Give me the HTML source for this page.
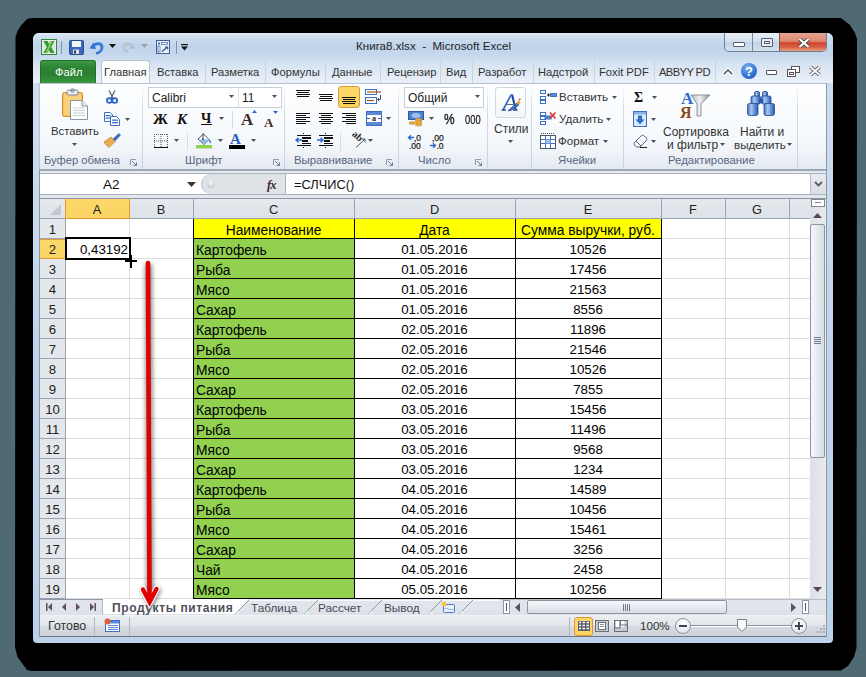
<!DOCTYPE html>
<html><head><meta charset="utf-8">
<style>
*{margin:0;padding:0;box-sizing:border-box}
html,body{width:866px;height:677px;overflow:hidden;background:#4f6a72;font-family:"Liberation Sans",sans-serif;}
.a{position:absolute}
.t{position:absolute;white-space:nowrap;line-height:1}
#frame{left:16px;top:18px;width:841px;height:652px;background:#000;border-radius:20px}
#win{left:33px;top:33px;width:800px;height:610px;background:linear-gradient(180deg,#cfdff1,#c0d5ec 50%,#bcd2ea);border-radius:6px 6px 4px 4px;overflow:hidden}
#title{left:33px;top:33px;width:800px;height:50px;background:linear-gradient(180deg,#e4edf7 0%,#d0e0f1 6%,#bfd4ec 26%,#c6d8ed 45%,#d9e5f3 65%,#eaf0f8 100%);border-radius:6px 6px 0 0}
.tab{font-size:11.2px;color:#333;}
.sep{position:absolute;width:1px;background:#c9d4e1}
#ribbon{left:39px;top:83px;width:788px;height:87px;background:linear-gradient(180deg,#fdfeff 0%,#f6f9fc 60%,#e9eef5 100%);border:1px solid #b8c3d0;border-bottom:none}
.grp{position:absolute;top:85px;height:84px;width:1px;background:linear-gradient(180deg,rgba(200,210,222,0) 0%,#d2dae4 30%,#c9d2dd 100%)}
.glabel{position:absolute;top:155px;font-size:11.4px;color:#56677e}
.rt{font-size:11.6px;color:#333}
.cell{position:absolute;font-size:13.8px;color:#000;line-height:1;white-space:nowrap}
.num{font-size:13.3px}
</style></head><body>
<svg class="a" style="left:0;top:0" width="866" height="677"><path d="M31 18 L841 18 L850 25 L855 33 L857 39 L856.5 648 L854 657 L848 666 L841 670.5 L31 671 L27 670 L17.5 657 L15 647 L15.5 37 L17.5 31 L21 25.5 L27 19 Z" fill="#000"/></svg>
<div class="a" id="win"></div>
<div class="a" id="title"></div>

<svg class="a" style="left:41px;top:39px" width="16" height="16" viewBox="0 0 16 16">
 <rect x="0.5" y="0.5" width="15" height="15" fill="#f4f6f4" stroke="#2e8b35"/>
 <rect x="1.5" y="1.5" width="13" height="13" fill="#dfe4df"/>
 <path d="M2.5 2 L6.5 2 L8 5 L9.5 2 L13.5 2 L10.2 8 L13.5 14 L9.5 14 L8 11 L6.5 14 L2.5 14 L5.8 8 Z" fill="#2f9a36"/>
 <path d="M9.5 2 L11.5 2 L6.5 14 L4.5 14 Z" fill="#9fe070" opacity=".75"/>
</svg>
<div class="a" style="left:61px;top:41px;width:1px;height:13px;background:#8593a5"></div>
<svg class="a" style="left:69px;top:40px" width="15" height="15" viewBox="0 0 15 15">
 <rect x="0.5" y="0.5" width="14" height="14" rx="1" fill="#3c68b8" stroke="#274c8c"/>
 <rect x="3" y="1" width="9" height="6" fill="#f2f5fa"/>
 <rect x="4" y="9.5" width="6" height="4.5" fill="#dce3ee"/>
 <rect x="5" y="10.5" width="2" height="3" fill="#3a3a3a"/>
</svg>
<svg class="a" style="left:89px;top:40px" width="16" height="15" viewBox="0 0 16 15">
 <path d="M4.5 2.5 L0.5 8.5 L7 9 Z" fill="#2f6fd0"/>
 <path d="M4 6.5 C7 2.5 13 2.5 13 7.5 C13 11 9.5 13 7 13.5" stroke="#3579d4" stroke-width="2.8" fill="none"/>
</svg>
<svg class="a" style="left:109px;top:44px" width="7" height="4"><path d="M0 0 H7 L3.5 4 Z" fill="#111"/></svg>
<svg class="a" style="left:122px;top:41px" width="14" height="12" viewBox="0 0 14 12">
 <path d="M10 2 L13.5 7.5 L7.5 7.5 Z" fill="#b4bcc6"/>
 <path d="M10 5 C7 1.5 2 2 2 6 C2 9 4 10.5 6.5 11" stroke="#bcc3cc" stroke-width="2.4" fill="none"/>
</svg>
<svg class="a" style="left:141px;top:44px" width="7" height="4"><path d="M0 0 H7 L3.5 4 Z" fill="#9aa3ad"/></svg>
<svg class="a" style="left:156px;top:40px" width="14" height="14" viewBox="0 0 14 14">
 <rect x="0.5" y="0.5" width="13" height="13" fill="#eef3fa" stroke="#3d5f9c"/>
 <rect x="2" y="2.5" width="2" height="2" fill="#4a70b0"/><rect x="5.5" y="2.5" width="6" height="2" fill="#fff" stroke="#4a70b0" stroke-width=".8"/>
 <rect x="2" y="6" width="2" height="6" fill="#fff" stroke="#4a70b0" stroke-width=".8"/>
 <path d="M6 11.5 L11.5 7" stroke="#2a4f8f" stroke-width="1.2"/><path d="M9 7 H11.7 V9.5" stroke="#2a4f8f" stroke-width="1" fill="none"/>
</svg>
<div class="a" style="left:176px;top:41px;width:1px;height:13px;background:#8593a5"></div>
<svg class="a" style="left:181px;top:44px" width="7" height="7"><rect x="0" y="0" width="7" height="1.2" fill="#111"/><path d="M0 2.5 H7 L3.5 6.5 Z" fill="#111"/></svg>
<div class="t" style="left:356px;top:40px;font-size:11.6px;color:#1e1e1e">Книга8.xlsx&nbsp; - &nbsp;Microsoft Excel</div>
<div class="a" style="left:724px;top:33px;width:103px;height:19px;border:1px solid #6f7f92;border-top:none;border-radius:0 0 5px 5px;overflow:hidden;background:linear-gradient(180deg,#e9eff7,#d3deeb 50%,#c3d3e6 51%,#d4e2f1)">
  <div class="a" style="left:27px;top:0;width:1px;height:18px;background:#7a889a"></div>
  <div class="a" style="left:54px;top:0;width:48px;height:18px;background:linear-gradient(180deg,#e8a48f 0%,#dc8a72 45%,#d0432d 55%,#d7644a 80%,#eaa07a 100%);border-left:1px solid #7a5a50"></div>
</div>
<div class="a" style="left:733px;top:42px;width:12px;height:5px;background:#fff;border:1px solid #555e6a;border-radius:1px"></div>
<div class="a" style="left:761px;top:38px;width:12px;height:9px;border:1px solid #555e6a;background:#e8eef6;border-radius:1px"><div class="a" style="left:2px;top:2px;width:6px;height:3px;border:1px solid #555e6a;background:#fff"></div></div>
<svg class="a" style="left:798px;top:38px" width="12" height="10" viewBox="0 0 12 10"><path d="M1.5 1 L10.5 9 M10.5 1 L1.5 9" stroke="#4a4a4a" stroke-width="3.8"/><path d="M1.5 1 L10.5 9 M10.5 1 L1.5 9" stroke="#fff" stroke-width="2.2"/></svg>
<div class="a" style="left:40px;top:60px;width:56px;height:23px;background:linear-gradient(180deg,#3c9a42 0%,#2e8634 25%,#2a7f30 60%,#3b973f 100%);border-radius:3px 3px 0 0;border:1px solid #216f28;border-bottom:none"></div>
<div class="t" style="left:55px;top:67px;font-size:11.2px;color:#fff">Файл</div>
<div class="a" style="left:101px;top:60px;width:49px;height:24px;background:linear-gradient(180deg,#fefefe,#f7f9fc);border:1px solid #b9c4d1;border-bottom:none;border-radius:3px 3px 0 0"></div>

<div class="t tab" style="left:104px;top:67px">Главная</div>
<div class="t tab" style="left:157px;top:67px">Вставка</div>
<div class="sep" style="left:205px;top:60px;height:23px"></div>
<div class="t tab" style="left:211px;top:67px">Разметка</div>
<div class="sep" style="left:265px;top:60px;height:23px"></div>
<div class="t tab" style="left:271px;top:67px">Формулы</div>
<div class="sep" style="left:325px;top:60px;height:23px"></div>
<div class="t tab" style="left:332px;top:67px">Данные</div>
<div class="sep" style="left:380px;top:60px;height:23px"></div>
<div class="t tab" style="left:387px;top:67px">Рецензир</div>
<div class="sep" style="left:440px;top:60px;height:23px"></div>
<div class="t tab" style="left:446px;top:67px">Вид</div>
<div class="sep" style="left:472px;top:60px;height:23px"></div>
<div class="t tab" style="left:478px;top:67px">Разработ</div>
<div class="sep" style="left:533px;top:60px;height:23px"></div>
<div class="t tab" style="left:538px;top:67px">Надстрой</div>
<div class="sep" style="left:594px;top:60px;height:23px"></div>
<div class="t tab" style="left:599px;top:67px">Foxit PDF</div>
<div class="sep" style="left:654px;top:60px;height:23px"></div>
<div class="t tab" style="left:659px;top:67px"><span style='letter-spacing:-.6px'>ABBYY PD</span></div>
<div class="sep" style="left:715px;top:60px;height:23px"></div>
<svg class="a" style="left:723px;top:68px" width="10" height="7" viewBox="0 0 10 7"><path d="M1 6 L5 2 L9 6" stroke="#fff" stroke-width="3.4" fill="none"/><path d="M1 6 L5 2 L9 6" stroke="#4f4a4a" stroke-width="1.4" fill="none"/></svg>
<div class="a" style="left:741px;top:63px;width:16px;height:16px;border-radius:50%;background:radial-gradient(circle at 40% 30%,#7fb4f0,#2b6fd1 60%,#1d57b0)"></div>
<div class="t" style="left:745px;top:64px;font:bold 13px 'Liberation Sans';color:#fff">?</div>
<div class="a" style="left:766px;top:70px;width:11px;height:5px;border:1px solid #5a5056;background:#fff;border-radius:1px"></div>
<svg class="a" style="left:787px;top:66px" width="13" height="11" viewBox="0 0 13 11"><rect x="4.5" y="0.5" width="8" height="6" fill="#fff" stroke="#5a5056"/><rect x="0.5" y="3.5" width="8" height="7" fill="#fff" stroke="#5a5056"/><rect x="2.5" y="6.5" width="4" height="2" fill="none" stroke="#5a5056"/></svg>
<svg class="a" style="left:809px;top:66px" width="12" height="10" viewBox="0 0 12 10"><path d="M1.5 1 L10.5 9 M10.5 1 L1.5 9" stroke="#5a5056" stroke-width="3.6"/><path d="M1.5 1 L10.5 9 M10.5 1 L1.5 9" stroke="#fff" stroke-width="1.8"/></svg><div class="a" id="ribbon"></div>
<div class="a" style="left:40px;top:154px;width:786px;height:16px;background:linear-gradient(180deg,#eef2f7,#e3e9f1)"></div>
<div class="grp" style="left:142px"></div>
<div class="grp" style="left:284px"></div>
<div class="grp" style="left:398px"></div>
<div class="grp" style="left:487px"></div>
<div class="grp" style="left:531px"></div>
<div class="grp" style="left:623px"></div>
<div class="grp" style="left:797px"></div>
<div class="t glabel" style="left:44px;font-size:11.2px">Буфер обмена</div>
<div class="t glabel" style="left:185px;font-size:11.4px">Шрифт</div>
<div class="t glabel" style="left:294px;font-size:11.4px">Выравнивание</div>
<div class="t glabel" style="left:418px;font-size:11.4px">Число</div>
<div class="t glabel" style="left:558px;font-size:11.4px">Ячейки</div>
<div class="t glabel" style="left:668px;font-size:11.4px">Редактирование</div>
<svg class="a" style="left:130px;top:159px" width="7" height="7" viewBox="0 0 7 7"><path d="M0.5 6 V0.5 H6" stroke="#8b9bb0" fill="none"/><path d="M2 2 L6.5 6.5 M3.5 6.5 H6.5 V3.5" stroke="#6f7f95" fill="none"/></svg>
<svg class="a" style="left:273px;top:159px" width="7" height="7" viewBox="0 0 7 7"><path d="M0.5 6 V0.5 H6" stroke="#8b9bb0" fill="none"/><path d="M2 2 L6.5 6.5 M3.5 6.5 H6.5 V3.5" stroke="#6f7f95" fill="none"/></svg>
<svg class="a" style="left:386px;top:159px" width="7" height="7" viewBox="0 0 7 7"><path d="M0.5 6 V0.5 H6" stroke="#8b9bb0" fill="none"/><path d="M2 2 L6.5 6.5 M3.5 6.5 H6.5 V3.5" stroke="#6f7f95" fill="none"/></svg>
<svg class="a" style="left:475px;top:159px" width="7" height="7" viewBox="0 0 7 7"><path d="M0.5 6 V0.5 H6" stroke="#8b9bb0" fill="none"/><path d="M2 2 L6.5 6.5 M3.5 6.5 H6.5 V3.5" stroke="#6f7f95" fill="none"/></svg>
<svg class="a" style="left:60px;top:88px" width="30" height="32" viewBox="0 0 30 32">
 <rect x="2.5" y="4.5" width="20" height="24" rx="2" fill="#f7c25a" stroke="#d38b2e"/>
 <rect x="4" y="6" width="17" height="21" fill="#fbd27c"/>
 <rect x="7" y="2" width="11" height="5" rx="1.5" fill="#e9ecef" stroke="#7d8590"/>
 <circle cx="12.5" cy="2.5" r="1.6" fill="none" stroke="#6f7782"/>
 <path d="M10.5 12.5 H22 L27.5 18 V31.5 H10.5 Z" fill="#fff" stroke="#8895a4"/>
 <path d="M22 12.5 V18 H27.5" fill="#e6ebf2" stroke="#8895a4"/>
 <path d="M13 20 H25 M13 22.5 H25 M13 25 H25 M13 27.5 H25" stroke="#b8c4d2" stroke-width=".8"/>
</svg>
<div class="t rt" style="left:51px;top:126px;font-size:11.3px">Вставить</div>
<svg class="a" style="left:72px;top:143px" width="5" height="3"><path d="M0 0 H5 L2.5 3 Z" fill="#4a4f5a"/></svg>
<svg class="a" style="left:106px;top:90px" width="12" height="14" viewBox="0 0 12 14">
 <path d="M3 0.5 L7 8 M9 0.5 L5 8" stroke="#5a6270" stroke-width="1.3"/>
 <circle cx="3.3" cy="10.5" r="2.4" fill="none" stroke="#2b62c8" stroke-width="1.8"/>
 <circle cx="8.7" cy="10.5" r="2.4" fill="none" stroke="#2b62c8" stroke-width="1.8"/>
</svg>
<svg class="a" style="left:104px;top:112px" width="16" height="14" viewBox="0 0 16 14">
 <path d="M0.5 0.5 H6 L8.5 3 V9.5 H0.5 Z" fill="#fff" stroke="#3a6fc4"/>
 <rect x="1.5" y="3" width="5" height="1.2" fill="#3a6fc4"/><rect x="1.5" y="5.5" width="5" height="1.2" fill="#3a6fc4"/>
 <path d="M6.5 4.5 H12.5 L15.5 7.5 V13.5 H6.5 Z" fill="#fff" stroke="#3a6fc4"/>
 <rect x="8" y="7.5" width="6" height="1.3" fill="#3a6fc4"/><rect x="8" y="10" width="6" height="1.3" fill="#3a6fc4"/>
</svg>
<svg class="a" style="left:125px;top:118px" width="5" height="3"><path d="M0 0 H5 L2.5 3 Z" fill="#4a4f5a"/></svg>
<svg class="a" style="left:103px;top:133px" width="18" height="15" viewBox="0 0 18 15">
 <path d="M10 6 L16 0.5 L17.5 2 L12 8 Z" fill="#3d6fc8" stroke="#2a55a0" stroke-width=".6"/>
 <path d="M1 9 L8 4 L12 8.5 L6 14.5 C4 13 2 11 1 9 Z" fill="#f2b860" stroke="#b77a2b" stroke-width=".8"/>
 <path d="M3 10 L8 6 M5 12 L10 7.5" stroke="#c98a3a" stroke-width=".8"/>
</svg>
<div class="a" style="left:148px;top:87px;width:134px;height:21px;background:#fff;border:1px solid #c5cfdb"></div>
<div class="a" style="left:238px;top:88px;width:1px;height:19px;background:#dde3ea"></div>
<div class="t" style="left:152px;top:92px;font-size:12px;color:#222">Calibri</div>
<div class="t" style="left:242px;top:92px;font-size:12px;color:#222">11</div>
<svg class="a" style="left:229px;top:95px" width="5" height="3"><path d="M0 0 H5 L2.5 3 Z" fill="#4a4f5a"/></svg>
<svg class="a" style="left:272px;top:95px" width="5" height="3"><path d="M0 0 H5 L2.5 3 Z" fill="#4a4f5a"/></svg>
<div class="t" style="left:153px;top:111px;font:bold 15px 'Liberation Serif',serif;color:#111">Ж</div>
<div class="t" style="left:177px;top:111px;font:italic bold 15px 'Liberation Serif',serif;color:#111">К</div>
<div class="t" style="left:201px;top:111px;font:bold 14px 'Liberation Serif',serif;color:#111">Ч</div>
<div class="a" style="left:201px;top:124px;width:11px;height:1px;background:#111"></div>
<svg class="a" style="left:219px;top:117px" width="5" height="3"><path d="M0 0 H5 L2.5 3 Z" fill="#4a4f5a"/></svg>
<div class="a" style="left:232px;top:111px;width:1px;height:17px;background:#d4dbe4"></div>
<div class="t" style="left:241px;top:110px;font:bold 17px 'Liberation Serif',serif;color:#3e2a28">A</div>
<svg class="a" style="left:252px;top:110px" width="5" height="3"><path d="M0 3 L2.5 0 L5 3Z" fill="#2b6ac9"/></svg>
<div class="t" style="left:264px;top:115px;font:bold 13px 'Liberation Serif',serif;color:#3e2a28">A</div>
<svg class="a" style="left:273px;top:111px" width="5" height="3"><path d="M0 0 L5 0 L2.5 3Z" fill="#2b6ac9"/></svg>
<svg class="a" style="left:154px;top:134px" width="14" height="14" viewBox="0 0 14 14">
 <path d="M0.5 0 V13 M13.5 0 V13 M7 0 V13 M0 0.5 H14 M0 7 H14" stroke="#5a6270" stroke-width="1" stroke-dasharray="1 1" fill="none"/>
 <rect x="0" y="13" width="14" height="1.2" fill="#111"/>
</svg>
<svg class="a" style="left:174px;top:139px" width="5" height="3"><path d="M0 0 H5 L2.5 3 Z" fill="#4a4f5a"/></svg>
<div class="a" style="left:187px;top:133px;width:1px;height:17px;background:#d4dbe4"></div>
<svg class="a" style="left:196px;top:132px" width="17" height="17" viewBox="0 0 17 17">
 <path d="M2 7 L7.5 2 L13 7.5 L8 12.5 Z" fill="#fff" stroke="#4a5564" stroke-width="1"/>
 <path d="M2.5 7.5 L13 7.5 L8 12.5 Z" fill="#8fb6e8"/>
 <path d="M7 1 V7" stroke="#4a5564"/><circle cx="7" cy="7" r="1" fill="#4a5564"/>
 <path d="M13 7.5 C15 9 15.5 10.5 14.5 11.5 C13.5 10.5 13 9.5 13 7.5Z" fill="#2b6ac9"/>
 <rect x="0" y="13" width="16" height="3.5" fill="#92d050"/>
</svg>
<svg class="a" style="left:218px;top:139px" width="5" height="3"><path d="M0 0 H5 L2.5 3 Z" fill="#4a4f5a"/></svg>
<div class="t" style="left:230px;top:131px;font:bold 15px 'Liberation Serif',serif;color:#2a5fbd">A</div>
<div class="a" style="left:229px;top:145px;width:16px;height:3.5px;background:#000;"></div>
<svg class="a" style="left:251px;top:139px" width="5" height="3"><path d="M0 0 H5 L2.5 3 Z" fill="#4a4f5a"/></svg>
<div class="a" style="left:296px;top:90px;width:14px;height:1px;background:#111"></div><div class="a" style="left:297px;top:92px;width:12px;height:1px;background:#111"></div><div class="a" style="left:296px;top:94px;width:14px;height:1px;background:#111"></div><div class="a" style="left:297px;top:96px;width:12px;height:1px;background:#111"></div>
<div class="a" style="left:319px;top:94px;width:14px;height:1px;background:#111"></div><div class="a" style="left:320px;top:96px;width:12px;height:1px;background:#111"></div><div class="a" style="left:319px;top:98px;width:14px;height:1px;background:#111"></div><div class="a" style="left:320px;top:100px;width:12px;height:1px;background:#111"></div>
<div class="a" style="left:338px;top:86px;width:22px;height:22px;border:1px solid #d9953a;border-radius:3px;background:linear-gradient(180deg,#fdd86a,#fcd45c)"></div>
<div class="a" style="left:342px;top:97px;width:14px;height:1px;background:#111"></div><div class="a" style="left:343px;top:99px;width:12px;height:1px;background:#111"></div><div class="a" style="left:342px;top:101px;width:14px;height:1px;background:#111"></div><div class="a" style="left:343px;top:103px;width:12px;height:1px;background:#111"></div>
<svg class="a" style="left:365px;top:89px" width="17" height="16" viewBox="0 0 17 16">
 <rect x="0.5" y="0.5" width="11" height="5" fill="#fff" stroke="#3a6fc4"/>
 <path d="M2 3 H16" stroke="#a5521e" stroke-width="1.2"/>
 <rect x="0.5" y="8.5" width="11" height="6" fill="#fff" stroke="#3a6fc4"/>
 <path d="M2 11.5 H9" stroke="#a5521e" stroke-width="1.2"/>
 <path d="M15.5 6 V10.5 H12.5 M14 9 L12.5 10.5 L14 12" stroke="#4a5564" fill="none"/>
</svg>
<div class="a" style="left:296px;top:113px;width:14px;height:1px;background:#111"></div><div class="a" style="left:296px;top:115px;width:10px;height:1px;background:#111"></div><div class="a" style="left:296px;top:117px;width:14px;height:1px;background:#111"></div><div class="a" style="left:296px;top:119px;width:10px;height:1px;background:#111"></div><div class="a" style="left:296px;top:121px;width:14px;height:1px;background:#111"></div><div class="a" style="left:296px;top:123px;width:10px;height:1px;background:#111"></div>
<div class="a" style="left:319px;top:113px;width:14px;height:1px;background:#111"></div><div class="a" style="left:321px;top:115px;width:10px;height:1px;background:#111"></div><div class="a" style="left:319px;top:117px;width:14px;height:1px;background:#111"></div><div class="a" style="left:321px;top:119px;width:10px;height:1px;background:#111"></div><div class="a" style="left:319px;top:121px;width:14px;height:1px;background:#111"></div><div class="a" style="left:321px;top:123px;width:10px;height:1px;background:#111"></div>
<div class="a" style="left:342px;top:113px;width:14px;height:1px;background:#111"></div><div class="a" style="left:346px;top:115px;width:10px;height:1px;background:#111"></div><div class="a" style="left:342px;top:117px;width:14px;height:1px;background:#111"></div><div class="a" style="left:346px;top:119px;width:10px;height:1px;background:#111"></div><div class="a" style="left:342px;top:121px;width:14px;height:1px;background:#111"></div><div class="a" style="left:346px;top:123px;width:10px;height:1px;background:#111"></div>
<svg class="a" style="left:366px;top:111px" width="16" height="15" viewBox="0 0 16 15">
 <rect x="0.5" y="0.5" width="15" height="14" fill="#fff" stroke="#3a6fc4"/>
 <rect x="1" y="1" width="14" height="3" fill="#5b8bd6"/><rect x="1" y="11" width="14" height="3" fill="#5b8bd6"/>
 <path d="M1 7.5 H4 M12 7.5 H15" stroke="#4a5564"/>
 <text x="8" y="10" font-family="Liberation Serif" font-weight="bold" font-size="8" text-anchor="middle" fill="#222">a</text>
</svg>
<svg class="a" style="left:386px;top:117px" width="5" height="3"><path d="M0 0 H5 L2.5 3 Z" fill="#4a4f5a"/></svg>
<div class="a" style="left:297px;top:135px;width:14px;height:1px;background:#111;"></div>
<div class="a" style="left:302px;top:137px;width:9px;height:2px;background:#111;"></div>
<div class="a" style="left:302px;top:140px;width:6px;height:2px;background:#111;"></div>
<div class="a" style="left:302px;top:143px;width:9px;height:1px;background:#111;"></div>
<div class="a" style="left:297px;top:145px;width:14px;height:1px;background:#111;"></div>
<div class="a" style="left:297px;top:135px;width:4px;height:1px;background:#111;"></div>
<div class="a" style="left:303px;top:133px;width:1px;height:1px;background:#111;"></div>
<div class="a" style="left:303px;top:147px;width:1px;height:1px;background:#111;"></div>
<svg class="a" style="left:295px;top:137px" width="7" height="6" viewBox="0 0 7 6"><path d="M7 3 H1.5 M3.5 0.8 L1 3 L3.5 5.2" stroke="#2b6ac9" stroke-width="1.5" fill="none"/></svg>
<div class="a" style="left:319px;top:135px;width:14px;height:1px;background:#111;"></div>
<div class="a" style="left:324px;top:137px;width:9px;height:2px;background:#111;"></div>
<div class="a" style="left:324px;top:140px;width:6px;height:2px;background:#111;"></div>
<div class="a" style="left:324px;top:143px;width:9px;height:1px;background:#111;"></div>
<div class="a" style="left:319px;top:145px;width:14px;height:1px;background:#111;"></div>
<div class="a" style="left:319px;top:135px;width:4px;height:1px;background:#111;"></div>
<div class="a" style="left:325px;top:133px;width:1px;height:1px;background:#111;"></div>
<div class="a" style="left:325px;top:147px;width:1px;height:1px;background:#111;"></div>
<svg class="a" style="left:317px;top:137px" width="7" height="6" viewBox="0 0 7 6"><path d="M0 3 H5.5 M3.5 0.8 L6 3 L3.5 5.2" stroke="#2b6ac9" stroke-width="1.5" fill="none"/></svg>
<div class="a" style="left:340px;top:133px;width:1px;height:18px;background:#d4dbe4"></div>
<svg class="a" style="left:348px;top:131px" width="20" height="18" viewBox="0 0 20 18">
 <text x="0" y="0" font-family="Liberation Serif" font-weight="bold" font-size="10" fill="#222" transform="translate(3.5 4) rotate(42)">ab</text>
 <path d="M8 16.5 L17 8 M13.5 8 H17 V11.5" stroke="#4a5564" stroke-width="1" fill="none"/>
</svg>
<svg class="a" style="left:368px;top:139px" width="5" height="3"><path d="M0 0 H5 L2.5 3 Z" fill="#4a4f5a"/></svg>
<div class="a" style="left:404px;top:87px;width:80px;height:21px;background:#fff;border:1px solid #c5cfdb"></div>
<div class="t" style="left:408px;top:92px;font-size:12px;color:#222">Общий</div>
<svg class="a" style="left:475px;top:95px" width="5" height="3"><path d="M0 0 H5 L2.5 3 Z" fill="#4a4f5a"/></svg>
<svg class="a" style="left:408px;top:110px" width="16" height="17" viewBox="0 0 16 17">
 <rect x="0.5" y="1.5" width="15" height="8" fill="#4a7fd0" stroke="#2f5aa5"/>
 <ellipse cx="8" cy="5.5" rx="4.5" ry="2.5" fill="#9cc0ee"/>
 <ellipse cx="10.5" cy="10" rx="3.5" ry="1.4" fill="#f0b43c" stroke="#b77a2b" stroke-width=".6"/>
 <ellipse cx="10.5" cy="12.3" rx="3.5" ry="1.4" fill="#f0b43c" stroke="#b77a2b" stroke-width=".6"/>
 <ellipse cx="10.5" cy="14.6" rx="3.5" ry="1.4" fill="#f0b43c" stroke="#b77a2b" stroke-width=".6"/>
 <ellipse cx="4" cy="13" rx="3" ry="1.3" fill="#f0b43c" stroke="#b77a2b" stroke-width=".6"/>
</svg>
<svg class="a" style="left:429px;top:117px" width="5" height="3"><path d="M0 0 H5 L2.5 3 Z" fill="#4a4f5a"/></svg>
<div class="t" style="left:444px;top:112px;font-size:14.5px;color:#111;-webkit-text-stroke:.35px #111;transform:scaleX(.82);transform-origin:0 0">%</div>
<div class="t" style="left:465px;top:113px;font-size:13px;color:#111;-webkit-text-stroke:.2px #111;transform:scaleX(.72);transform-origin:0 0">000</div>
<svg class="a" style="left:407px;top:133px" width="18" height="16" viewBox="0 0 18 16">
 <path d="M1.5 4.5 H7 M4 2.2 L1.5 4.5 L4 6.8" stroke="#2b6ac9" stroke-width="1.4" fill="none"/>
 <text x="7" y="8" font-family="Liberation Sans" font-size="8.5" fill="#222" stroke="#222" stroke-width=".25">,0</text>
 <text x="2" y="15.5" font-family="Liberation Sans" font-size="8.5" fill="#222" stroke="#222" stroke-width=".25">,00</text>
</svg>
<svg class="a" style="left:429px;top:133px" width="18" height="16" viewBox="0 0 18 16">
 <text x="3" y="8" font-family="Liberation Sans" font-size="8.5" fill="#222" stroke="#222" stroke-width=".25">,00</text>
 <path d="M1 12.5 H6.5 M4 10.2 L6.5 12.5 L4 14.8" stroke="#2b6ac9" stroke-width="1.4" fill="none"/>
 <text x="7.5" y="15.5" font-family="Liberation Sans" font-size="8.5" fill="#222" stroke="#222" stroke-width=".25">,0</text>
</svg>
<div class="a" style="left:495px;top:87px;width:31px;height:31px;border:1px solid #d0d7e1;border-radius:3px;background:linear-gradient(180deg,#fff,#f3f6fa)"></div>
<svg class="a" style="left:500px;top:92px" width="22" height="22" viewBox="0 0 22 22">
 <path d="M3 18 L11 3 L12.5 3 L16 18" stroke="#2f62c4" stroke-width="1.6" fill="none"/>
 <path d="M12 4 L15.5 17.5" stroke="#1e3f8a" stroke-width="1.4"/>
 <path d="M1.5 18.2 H6 M13 18.2 H17.5" stroke="#1e3f8a" stroke-width="1.3"/>
 <path d="M6.5 12.5 H13" stroke="#5a6a80" stroke-width="1"/>
 <path d="M8 18.5 C10 17 12 15 17 11 L19 13 C15 16 12 18.5 9 19 Z" fill="#3b73d0" stroke="#1e3f8a" stroke-width=".6"/>
 <path d="M16.5 10.5 L19 8 L20.5 10.5 L19 13 Z" fill="#f0b030"/>
 <path d="M19 8 L20.5 6.5" stroke="#e0502a" stroke-width="1.2"/>
</svg>
<div class="t rt" style="left:494px;top:123px;font-size:12px">Стили</div>
<svg class="a" style="left:508px;top:140px" width="5" height="3"><path d="M0 0 H5 L2.5 3 Z" fill="#4a4f5a"/></svg>
<svg class="a" style="left:540px;top:90px" width="17" height="15" viewBox="0 0 17 15">
 <rect x="0.5" y="0.5" width="5" height="3" fill="#fff" stroke="#3a6fc4"/><rect x="0.5" y="6.5" width="5" height="3" fill="#fff" stroke="#3a6fc4"/><rect x="0.5" y="10.5" width="5" height="3" fill="#fff" stroke="#3a6fc4"/>
 <path d="M7 5 H10 M8.5 3.5 V6.5" stroke="#222" stroke-width="1"/>
 <rect x="10.5" y="3.5" width="6" height="3" fill="#5b8bd6" stroke="#3a6fc4"/>
</svg>
<div class="t rt" style="left:559px;top:91px;font-size:11.6px">Вставить</div>
<svg class="a" style="left:612px;top:96px" width="5" height="3"><path d="M0 0 H5 L2.5 3 Z" fill="#4a4f5a"/></svg>
<svg class="a" style="left:540px;top:111px" width="17" height="15" viewBox="0 0 17 15">
 <rect x="0.5" y="1.5" width="5" height="3" fill="#fff" stroke="#3a6fc4"/><rect x="0.5" y="5.5" width="5" height="3" fill="#fff" stroke="#3a6fc4"/><rect x="0.5" y="10.5" width="5" height="3" fill="#fff" stroke="#3a6fc4"/>
 <rect x="5" y="5" width="6" height="3" fill="#5b8bd6" stroke="#3a6fc4"/>
 <path d="M10 1.5 L15.5 7.5 M15.5 1.5 L10 7.5" stroke="#e0302a" stroke-width="1.6"/>
</svg>
<div class="t rt" style="left:559px;top:113px;font-size:11.6px">Удалить</div>
<svg class="a" style="left:606px;top:118px" width="5" height="3"><path d="M0 0 H5 L2.5 3 Z" fill="#4a4f5a"/></svg>
<svg class="a" style="left:540px;top:133px" width="17" height="16" viewBox="0 0 17 16">
 <rect x="0.5" y="2.5" width="15" height="13" fill="#fff" stroke="#4a5564"/>
 <path d="M0.5 6.5 H15.5 M0.5 10.5 H15.5 M5.5 2.5 V15.5 M10.5 2.5 V15.5" stroke="#3a6fc4"/>
 <rect x="5.5" y="6.5" width="5" height="4" fill="#9cc0ee"/>
 <path d="M1 0.5 H15" stroke="#4a5564" stroke-dasharray="1 1"/>
</svg>
<div class="t rt" style="left:558px;top:135px;font-size:11.6px">Формат</div>
<svg class="a" style="left:603px;top:140px" width="5" height="3"><path d="M0 0 H5 L2.5 3 Z" fill="#4a4f5a"/></svg>
<div class="t" style="left:634px;top:90px;font:bold 14px 'Liberation Serif',serif;color:#111">Σ</div>
<svg class="a" style="left:652px;top:96px" width="5" height="3"><path d="M0 0 H5 L2.5 3 Z" fill="#4a4f5a"/></svg>
<svg class="a" style="left:633px;top:111px" width="14" height="16" viewBox="0 0 14 16">
 <rect x="0.5" y="0.5" width="13" height="15" fill="#dbe8f8" stroke="#3a6fc4"/>
 <rect x="1" y="1" width="12" height="2.5" fill="#8fb3e6"/>
 <path d="M5 4.5 H9 V8.5 H11.5 L7 13.5 L2.5 8.5 H5 Z" fill="#2f6fd0"/>
</svg>
<svg class="a" style="left:651px;top:118px" width="5" height="3"><path d="M0 0 H5 L2.5 3 Z" fill="#4a4f5a"/></svg>
<svg class="a" style="left:633px;top:134px" width="15" height="14" viewBox="0 0 15 14">
 <path d="M1 9 L8 2 C9 1 10.5 1 11.5 2 L13 3.5 C14 4.5 14 6 13 7 L7 13 H3.5 L1.5 11 C1 10.5 1 9.5 1 9 Z" fill="#f4f8fc" stroke="#5a6b80"/>
 <path d="M3 7 L8 12" stroke="#5a6b80"/>
 <path d="M7 13.5 H14" stroke="#222"/>
</svg>
<svg class="a" style="left:651px;top:140px" width="5" height="3"><path d="M0 0 H5 L2.5 3 Z" fill="#4a4f5a"/></svg>
<svg class="a" style="left:680px;top:89px" width="32" height="30" viewBox="0 0 32 30">
 <defs><linearGradient id="fun" x1="0" x2="1"><stop offset="0" stop-color="#aeb4bb"/><stop offset=".45" stop-color="#eef0f2"/><stop offset="1" stop-color="#8d949c"/></linearGradient></defs>
 <path d="M11 6 H30 L21 15 V27 L17 27 V15 Z" fill="url(#fun)" stroke="#7a828c" stroke-width=".8"/>
 <text x="1" y="14.5" font-family="Liberation Serif" font-weight="bold" font-size="17" fill="#2f6ad0">A</text>
 <text x="0" y="29" font-family="Liberation Serif" font-weight="bold" font-size="16" fill="#8a4a20">Я</text>
</svg>
<div class="t rt" style="left:663px;top:126px;font-size:12px">Сортировка</div>
<div class="t rt" style="left:667px;top:139px;font-size:12px">и фильтр</div>
<svg class="a" style="left:720px;top:143px" width="5" height="3"><path d="M0 0 H5 L2.5 3 Z" fill="#4a4f5a"/></svg>
<svg class="a" style="left:747px;top:91px" width="28" height="26" viewBox="0 0 28 26">
 <defs><linearGradient id="bin" x1="0" x2="1"><stop offset="0" stop-color="#3f6fc0"/><stop offset=".35" stop-color="#a9c8f0"/><stop offset=".7" stop-color="#5b8ad4"/><stop offset="1" stop-color="#2f58a8"/></linearGradient></defs>
 <rect x="7.5" y="0.5" width="5" height="5" rx="1.5" fill="url(#bin)" stroke="#244a92" stroke-width=".8"/>
 <rect x="15.5" y="0.5" width="5" height="5" rx="1.5" fill="url(#bin)" stroke="#244a92" stroke-width=".8"/>
 <rect x="4" y="5" width="9.5" height="8" rx="1.5" fill="url(#bin)" stroke="#244a92" stroke-width=".8"/>
 <rect x="14.5" y="5" width="9.5" height="8" rx="1.5" fill="url(#bin)" stroke="#244a92" stroke-width=".8"/>
 <rect x="12" y="8" width="4" height="4" fill="#2f58a8"/>
 <rect x="0.5" y="12.5" width="10.5" height="12" rx="2" fill="url(#bin)" stroke="#244a92" stroke-width=".8"/>
 <rect x="17" y="12.5" width="10.5" height="12" rx="2" fill="url(#bin)" stroke="#244a92" stroke-width=".8"/>
</svg>
<div class="t rt" style="left:740px;top:126px;font-size:12px">Найти и</div>
<div class="t rt" style="left:734px;top:139px;font-size:11.6px">выделить</div>
<svg class="a" style="left:787px;top:143px" width="5" height="3"><path d="M0 0 H5 L2.5 3 Z" fill="#4a4f5a"/></svg><div class="a" style="left:39px;top:169px;width:788px;height:2px;background:#9ea8b4"></div>
<div class="a" style="left:39px;top:171px;width:788px;height:3px;background:#e6ebf1"></div>
<div class="a" style="left:39px;top:173px;width:788px;height:22px;background:#fff;border-top:1px solid #a9b2bd;border-bottom:1px solid #a9b2bd"></div>
<div class="a" style="left:39px;top:195px;width:788px;height:4px;background:#e3e7ec"></div>
<div class="a" style="left:39px;top:198px;width:788px;height:1px;background:#8e98a4"></div>
<div class="t" style="left:103px;top:178px;font-size:13.6px;color:#111">A2</div>
<svg class="a" style="left:187px;top:182px" width="9" height="5"><path d="M0 0 H9 L4.5 5 Z" fill="#4a2e2e"/></svg>
<div class="a" style="left:201px;top:174px;width:85px;height:20px;background:#dfe3e8;border-radius:10px 0 0 10px;border-left:1px solid #b5bdc7"></div>
<div class="a" style="left:285px;top:174px;width:1px;height:20px;background:#a9b2bd"></div>
<div class="a" style="left:207px;top:180px;width:8px;height:8px;border-radius:50%;background:radial-gradient(circle at 50% 35%,#f4f6f8,#b9c0c8)"></div>
<div class="t" style="left:267px;top:178px;font:italic bold 12.5px 'Liberation Serif',serif;color:#3b2a2a;letter-spacing:-1px">fx</div>
<div class="t" style="left:294px;top:179px;font-size:12.8px;color:#111">=СЛЧИС()</div>
<div class="a" style="left:810px;top:174px;width:16px;height:20px;background:linear-gradient(180deg,#e8ebef,#dadfe5);border-left:1px solid #b5bdc7"></div>
<svg class="a" style="left:814px;top:181px" width="9" height="6" viewBox="0 0 9 6"><path d="M1 1 L4.5 4.5 L8 1" stroke="#5a5f6b" stroke-width="1.8" fill="none"/></svg>
<div class="a" style="left:39px;top:199px;width:771px;height:400px;background:#fff"></div>
<div class="a" style="left:39px;top:199px;width:1px;height:416px;background:#8e98a4"></div>
<div class="a" style="left:40px;top:199px;width:770px;height:19px;background:linear-gradient(180deg,#e6e9ee,#dde2e8)"></div>
<div class="a" style="left:40px;top:218px;width:770px;height:1px;background:#9aa4b0"></div>
<div class="a" style="left:40px;top:219px;width:25px;height:380px;background:#e4e7eb"></div>
<div class="a" style="left:65px;top:199px;width:1px;height:400px;background:#9aa4b0"></div>
<svg class="a" style="left:50px;top:204px" width="11" height="11"><path d="M11 0 V11 H0 Z" fill="#c3c8ce"/></svg>
<div class="a" style="left:65px;top:199px;width:65px;height:20px;background:linear-gradient(180deg,#fdd96a,#fad462);border:1px solid #e29b38;border-top:none"></div>
<div class="t" style="left:65px;width:64px;text-align:center;top:204px;font-size:12.8px;color:#222">A</div>
<div class="a" style="left:193px;top:199px;width:1px;height:19px;background:#9aa4b0"></div>
<div class="t" style="left:129px;width:64px;text-align:center;top:204px;font-size:12.8px;color:#222">B</div>
<div class="a" style="left:354px;top:199px;width:1px;height:19px;background:#9aa4b0"></div>
<div class="t" style="left:193px;width:161px;text-align:center;top:204px;font-size:12.8px;color:#222">C</div>
<div class="a" style="left:515px;top:199px;width:1px;height:19px;background:#9aa4b0"></div>
<div class="t" style="left:354px;width:161px;text-align:center;top:204px;font-size:12.8px;color:#222">D</div>
<div class="a" style="left:661px;top:199px;width:1px;height:19px;background:#9aa4b0"></div>
<div class="t" style="left:515px;width:146px;text-align:center;top:204px;font-size:12.8px;color:#222">E</div>
<div class="a" style="left:725px;top:199px;width:1px;height:19px;background:#9aa4b0"></div>
<div class="t" style="left:661px;width:64px;text-align:center;top:204px;font-size:12.8px;color:#222">F</div>
<div class="a" style="left:789px;top:199px;width:1px;height:19px;background:#9aa4b0"></div>
<div class="t" style="left:725px;width:64px;text-align:center;top:204px;font-size:12.8px;color:#222">G</div>
<div class="a" style="left:129px;top:219px;width:1px;height:380px;background:#dadcdd"></div>
<div class="a" style="left:193px;top:219px;width:1px;height:380px;background:#dadcdd"></div>
<div class="a" style="left:354px;top:219px;width:1px;height:380px;background:#dadcdd"></div>
<div class="a" style="left:515px;top:219px;width:1px;height:380px;background:#dadcdd"></div>
<div class="a" style="left:661px;top:219px;width:1px;height:380px;background:#dadcdd"></div>
<div class="a" style="left:725px;top:219px;width:1px;height:380px;background:#dadcdd"></div>
<div class="a" style="left:789px;top:219px;width:1px;height:380px;background:#dadcdd"></div>
<div class="a" style="left:66px;top:238px;width:744px;height:1px;background:#dadcdd"></div>
<div class="a" style="left:40px;top:238px;width:25px;height:1px;background:#9aa4b0"></div>
<div class="a" style="left:66px;top:258px;width:744px;height:1px;background:#dadcdd"></div>
<div class="a" style="left:40px;top:258px;width:25px;height:1px;background:#9aa4b0"></div>
<div class="a" style="left:66px;top:278px;width:744px;height:1px;background:#dadcdd"></div>
<div class="a" style="left:40px;top:278px;width:25px;height:1px;background:#9aa4b0"></div>
<div class="a" style="left:66px;top:298px;width:744px;height:1px;background:#dadcdd"></div>
<div class="a" style="left:40px;top:298px;width:25px;height:1px;background:#9aa4b0"></div>
<div class="a" style="left:66px;top:318px;width:744px;height:1px;background:#dadcdd"></div>
<div class="a" style="left:40px;top:318px;width:25px;height:1px;background:#9aa4b0"></div>
<div class="a" style="left:66px;top:338px;width:744px;height:1px;background:#dadcdd"></div>
<div class="a" style="left:40px;top:338px;width:25px;height:1px;background:#9aa4b0"></div>
<div class="a" style="left:66px;top:358px;width:744px;height:1px;background:#dadcdd"></div>
<div class="a" style="left:40px;top:358px;width:25px;height:1px;background:#9aa4b0"></div>
<div class="a" style="left:66px;top:378px;width:744px;height:1px;background:#dadcdd"></div>
<div class="a" style="left:40px;top:378px;width:25px;height:1px;background:#9aa4b0"></div>
<div class="a" style="left:66px;top:398px;width:744px;height:1px;background:#dadcdd"></div>
<div class="a" style="left:40px;top:398px;width:25px;height:1px;background:#9aa4b0"></div>
<div class="a" style="left:66px;top:418px;width:744px;height:1px;background:#dadcdd"></div>
<div class="a" style="left:40px;top:418px;width:25px;height:1px;background:#9aa4b0"></div>
<div class="a" style="left:66px;top:438px;width:744px;height:1px;background:#dadcdd"></div>
<div class="a" style="left:40px;top:438px;width:25px;height:1px;background:#9aa4b0"></div>
<div class="a" style="left:66px;top:458px;width:744px;height:1px;background:#dadcdd"></div>
<div class="a" style="left:40px;top:458px;width:25px;height:1px;background:#9aa4b0"></div>
<div class="a" style="left:66px;top:478px;width:744px;height:1px;background:#dadcdd"></div>
<div class="a" style="left:40px;top:478px;width:25px;height:1px;background:#9aa4b0"></div>
<div class="a" style="left:66px;top:498px;width:744px;height:1px;background:#dadcdd"></div>
<div class="a" style="left:40px;top:498px;width:25px;height:1px;background:#9aa4b0"></div>
<div class="a" style="left:66px;top:518px;width:744px;height:1px;background:#dadcdd"></div>
<div class="a" style="left:40px;top:518px;width:25px;height:1px;background:#9aa4b0"></div>
<div class="a" style="left:66px;top:538px;width:744px;height:1px;background:#dadcdd"></div>
<div class="a" style="left:40px;top:538px;width:25px;height:1px;background:#9aa4b0"></div>
<div class="a" style="left:66px;top:558px;width:744px;height:1px;background:#dadcdd"></div>
<div class="a" style="left:40px;top:558px;width:25px;height:1px;background:#9aa4b0"></div>
<div class="a" style="left:66px;top:578px;width:744px;height:1px;background:#dadcdd"></div>
<div class="a" style="left:40px;top:578px;width:25px;height:1px;background:#9aa4b0"></div>
<div class="a" style="left:66px;top:598px;width:744px;height:1px;background:#dadcdd"></div>
<div class="a" style="left:40px;top:598px;width:25px;height:1px;background:#9aa4b0"></div>
<div class="t" style="left:40px;width:25px;text-align:center;top:223px;font-size:13.2px;color:#222">1</div>
<div class="a" style="left:40px;top:239px;width:26px;height:20px;background:linear-gradient(180deg,#fdd96a,#fad462);border:1px solid #e29b38;border-left:none"></div>
<div class="t" style="left:40px;width:25px;text-align:center;top:243px;font-size:13.2px;color:#222">2</div>
<div class="t" style="left:40px;width:25px;text-align:center;top:263px;font-size:13.2px;color:#222">3</div>
<div class="t" style="left:40px;width:25px;text-align:center;top:283px;font-size:13.2px;color:#222">4</div>
<div class="t" style="left:40px;width:25px;text-align:center;top:303px;font-size:13.2px;color:#222">5</div>
<div class="t" style="left:40px;width:25px;text-align:center;top:323px;font-size:13.2px;color:#222">6</div>
<div class="t" style="left:40px;width:25px;text-align:center;top:343px;font-size:13.2px;color:#222">7</div>
<div class="t" style="left:40px;width:25px;text-align:center;top:363px;font-size:13.2px;color:#222">8</div>
<div class="t" style="left:40px;width:25px;text-align:center;top:383px;font-size:13.2px;color:#222">9</div>
<div class="t" style="left:40px;width:25px;text-align:center;top:403px;font-size:13.2px;color:#222">10</div>
<div class="t" style="left:40px;width:25px;text-align:center;top:423px;font-size:13.2px;color:#222">11</div>
<div class="t" style="left:40px;width:25px;text-align:center;top:443px;font-size:13.2px;color:#222">12</div>
<div class="t" style="left:40px;width:25px;text-align:center;top:463px;font-size:13.2px;color:#222">13</div>
<div class="t" style="left:40px;width:25px;text-align:center;top:483px;font-size:13.2px;color:#222">14</div>
<div class="t" style="left:40px;width:25px;text-align:center;top:503px;font-size:13.2px;color:#222">15</div>
<div class="t" style="left:40px;width:25px;text-align:center;top:523px;font-size:13.2px;color:#222">16</div>
<div class="t" style="left:40px;width:25px;text-align:center;top:543px;font-size:13.2px;color:#222">17</div>
<div class="t" style="left:40px;width:25px;text-align:center;top:563px;font-size:13.2px;color:#222">18</div>
<div class="t" style="left:40px;width:25px;text-align:center;top:583px;font-size:13.2px;color:#222">19</div>
<div class="a" style="left:193px;top:219px;width:469px;height:20px;background:#ffff00"></div>
<div class="a" style="left:193px;top:238px;width:162px;height:361px;background:#92d050"></div>
<div class="a" style="left:193px;top:219px;width:1px;height:380px;background:#000"></div>
<div class="a" style="left:354px;top:219px;width:1px;height:380px;background:#000"></div>
<div class="a" style="left:515px;top:219px;width:1px;height:380px;background:#000"></div>
<div class="a" style="left:661px;top:219px;width:1px;height:380px;background:#000"></div>
<div class="a" style="left:193px;top:238px;width:469px;height:1px;background:#000"></div>
<div class="a" style="left:193px;top:258px;width:469px;height:1px;background:#000"></div>
<div class="a" style="left:193px;top:278px;width:469px;height:1px;background:#000"></div>
<div class="a" style="left:193px;top:298px;width:469px;height:1px;background:#000"></div>
<div class="a" style="left:193px;top:318px;width:469px;height:1px;background:#000"></div>
<div class="a" style="left:193px;top:338px;width:469px;height:1px;background:#000"></div>
<div class="a" style="left:193px;top:358px;width:469px;height:1px;background:#000"></div>
<div class="a" style="left:193px;top:378px;width:469px;height:1px;background:#000"></div>
<div class="a" style="left:193px;top:398px;width:469px;height:1px;background:#000"></div>
<div class="a" style="left:193px;top:418px;width:469px;height:1px;background:#000"></div>
<div class="a" style="left:193px;top:438px;width:469px;height:1px;background:#000"></div>
<div class="a" style="left:193px;top:458px;width:469px;height:1px;background:#000"></div>
<div class="a" style="left:193px;top:478px;width:469px;height:1px;background:#000"></div>
<div class="a" style="left:193px;top:498px;width:469px;height:1px;background:#000"></div>
<div class="a" style="left:193px;top:518px;width:469px;height:1px;background:#000"></div>
<div class="a" style="left:193px;top:538px;width:469px;height:1px;background:#000"></div>
<div class="a" style="left:193px;top:558px;width:469px;height:1px;background:#000"></div>
<div class="a" style="left:193px;top:578px;width:469px;height:1px;background:#000"></div>
<div class="a" style="left:193px;top:598px;width:469px;height:1px;background:#000"></div>
<div class="t cell" style="left:193px;width:161px;text-align:center;top:223.6px">Наименование</div>
<div class="t cell" style="left:354px;width:161px;text-align:center;top:223.6px">Дата</div>
<div class="t cell" style="left:515px;width:146px;text-align:center;top:223.6px">Сумма выручки, руб.</div>
<div class="t cell" style="left:196px;top:243.6px">Картофель</div>
<div class="t cell num" style="left:354px;width:161px;text-align:center;top:243px">01.05.2016</div>
<div class="t cell num" style="left:515px;width:146px;text-align:center;top:243px">10526</div>
<div class="t cell" style="left:196px;top:263.6px">Рыба</div>
<div class="t cell num" style="left:354px;width:161px;text-align:center;top:263px">01.05.2016</div>
<div class="t cell num" style="left:515px;width:146px;text-align:center;top:263px">17456</div>
<div class="t cell" style="left:196px;top:283.6px">Мясо</div>
<div class="t cell num" style="left:354px;width:161px;text-align:center;top:283px">01.05.2016</div>
<div class="t cell num" style="left:515px;width:146px;text-align:center;top:283px">21563</div>
<div class="t cell" style="left:196px;top:303.6px">Сахар</div>
<div class="t cell num" style="left:354px;width:161px;text-align:center;top:303px">01.05.2016</div>
<div class="t cell num" style="left:515px;width:146px;text-align:center;top:303px">8556</div>
<div class="t cell" style="left:196px;top:323.6px">Картофель</div>
<div class="t cell num" style="left:354px;width:161px;text-align:center;top:323px">02.05.2016</div>
<div class="t cell num" style="left:515px;width:146px;text-align:center;top:323px">11896</div>
<div class="t cell" style="left:196px;top:343.6px">Рыба</div>
<div class="t cell num" style="left:354px;width:161px;text-align:center;top:343px">02.05.2016</div>
<div class="t cell num" style="left:515px;width:146px;text-align:center;top:343px">21546</div>
<div class="t cell" style="left:196px;top:363.6px">Мясо</div>
<div class="t cell num" style="left:354px;width:161px;text-align:center;top:363px">02.05.2016</div>
<div class="t cell num" style="left:515px;width:146px;text-align:center;top:363px">10526</div>
<div class="t cell" style="left:196px;top:383.6px">Сахар</div>
<div class="t cell num" style="left:354px;width:161px;text-align:center;top:383px">02.05.2016</div>
<div class="t cell num" style="left:515px;width:146px;text-align:center;top:383px">7855</div>
<div class="t cell" style="left:196px;top:403.6px">Картофель</div>
<div class="t cell num" style="left:354px;width:161px;text-align:center;top:403px">03.05.2016</div>
<div class="t cell num" style="left:515px;width:146px;text-align:center;top:403px">15456</div>
<div class="t cell" style="left:196px;top:423.6px">Рыба</div>
<div class="t cell num" style="left:354px;width:161px;text-align:center;top:423px">03.05.2016</div>
<div class="t cell num" style="left:515px;width:146px;text-align:center;top:423px">11496</div>
<div class="t cell" style="left:196px;top:443.6px">Мясо</div>
<div class="t cell num" style="left:354px;width:161px;text-align:center;top:443px">03.05.2016</div>
<div class="t cell num" style="left:515px;width:146px;text-align:center;top:443px">9568</div>
<div class="t cell" style="left:196px;top:463.6px">Сахар</div>
<div class="t cell num" style="left:354px;width:161px;text-align:center;top:463px">03.05.2016</div>
<div class="t cell num" style="left:515px;width:146px;text-align:center;top:463px">1234</div>
<div class="t cell" style="left:196px;top:483.6px">Картофель</div>
<div class="t cell num" style="left:354px;width:161px;text-align:center;top:483px">04.05.2016</div>
<div class="t cell num" style="left:515px;width:146px;text-align:center;top:483px">14589</div>
<div class="t cell" style="left:196px;top:503.6px">Рыба</div>
<div class="t cell num" style="left:354px;width:161px;text-align:center;top:503px">04.05.2016</div>
<div class="t cell num" style="left:515px;width:146px;text-align:center;top:503px">10456</div>
<div class="t cell" style="left:196px;top:523.6px">Мясо</div>
<div class="t cell num" style="left:354px;width:161px;text-align:center;top:523px">04.05.2016</div>
<div class="t cell num" style="left:515px;width:146px;text-align:center;top:523px">15461</div>
<div class="t cell" style="left:196px;top:543.6px">Сахар</div>
<div class="t cell num" style="left:354px;width:161px;text-align:center;top:543px">04.05.2016</div>
<div class="t cell num" style="left:515px;width:146px;text-align:center;top:543px">3256</div>
<div class="t cell" style="left:196px;top:563.6px">Чай</div>
<div class="t cell num" style="left:354px;width:161px;text-align:center;top:563px">04.05.2016</div>
<div class="t cell num" style="left:515px;width:146px;text-align:center;top:563px">2458</div>
<div class="t cell" style="left:196px;top:583.6px">Мясо</div>
<div class="t cell num" style="left:354px;width:161px;text-align:center;top:583px">05.05.2016</div>
<div class="t cell num" style="left:515px;width:146px;text-align:center;top:583px">10256</div>
<div class="t cell num" style="left:66px;width:62px;text-align:right;top:243px">0,43192</div>
<div class="a" style="left:65px;top:237px;width:66px;height:23px;border:2px solid #000"></div>
<div class="a" style="left:125px;top:254px;width:4px;height:4px;background:#fff"></div>
<div class="a" style="left:125px;top:260px;width:12px;height:2px;background:#000"></div>
<div class="a" style="left:130px;top:255px;width:2px;height:13px;background:#000"></div>
<div class="a" style="left:810px;top:199px;width:17px;height:400px;background:linear-gradient(90deg,#dde1e7,#e8ebef)"></div>
<div class="a" style="left:811px;top:199px;width:14px;height:8px;background:#fff;border:1px solid #7f8893"></div>
<div class="a" style="left:815px;top:202px;width:6px;height:1px;background:#7f8893"></div>
<svg class="a" style="left:813px;top:213px" width="9" height="5"><path d="M0 5 L4.5 0 L9 5 Z" fill="#5a4450"/></svg>
<div class="a" style="left:810px;top:224px;width:15px;height:234px;border:1px solid #8e959e;border-radius:2px;background:linear-gradient(90deg,#f5f7fa,#e3e8ef 60%,#d7dde5)"></div>
<div class="a" style="left:814px;top:337px;width:7px;height:7px;background:repeating-linear-gradient(180deg,#727c88 0 1px,transparent 1px 2px)"></div>
<svg class="a" style="left:813px;top:587px" width="9" height="5"><path d="M0 0 L4.5 5 L9 0 Z" fill="#5a4450"/></svg>
<div class="a" style="left:826px;top:83px;width:1px;height:554px;background:#8e98a4"></div>
<div class="a" style="left:39px;top:169px;width:1px;height:468px;background:#8e98a4"></div><div class="a" style="left:39px;top:614px;width:788px;height:1px;background:#9ea6b0"></div>
<div class="a" style="left:39px;top:615px;width:788px;height:22px;background:linear-gradient(180deg,#f3f5f7 0%,#e8ebef 10%,#e3e6eb 45%,#d5dae1 55%,#cdd2d9 100%)"></div>
<div class="a" style="left:39px;top:636px;width:788px;height:1px;background:#6f7884"></div>
<div class="t" style="left:48px;top:620px;font-size:12.4px;color:#333">Готово</div>
<div class="a" style="left:94px;top:617px;width:1px;height:19px;background:#b0b8c2"></div>
<div class="a" style="left:129px;top:617px;width:1px;height:19px;background:#b0b8c2"></div>
<div class="a" style="left:569px;top:617px;width:1px;height:19px;background:#b0b8c2"></div>
<svg class="a" style="left:104px;top:618px" width="16" height="14" viewBox="0 0 16 14">
 <rect x="1.5" y="2.5" width="14" height="11" fill="#fff" stroke="#3a6fc4"/>
 <rect x="2" y="3" width="13" height="2.5" fill="#5b8bd6"/>
 <path d="M4 7.5 H14 M4 9.5 H14 M4 11.5 H14" stroke="#5b8bd6"/>
 <circle cx="3.5" cy="3.5" r="3" fill="#e0603a"/>
</svg>
<div class="a" style="left:574px;top:617px;width:19px;height:19px;border:1px solid #d9953a;border-radius:3px;background:linear-gradient(180deg,#fdd86a,#fcd45c)"></div>
<svg class="a" style="left:578px;top:621px" width="12" height="10" viewBox="0 0 12 10"><rect x="0" y="0" width="12" height="10" fill="#5a5f6b"/><path d="M1 1.5 H3 M4.5 1.5 H7 M8.5 1.5 H11 M1 4.5 H3 M4.5 4.5 H7 M8.5 4.5 H11 M1 7.5 H3 M4.5 7.5 H7 M8.5 7.5 H11" stroke="#fff" stroke-width="1.6"/></svg>
<svg class="a" style="left:595px;top:620px" width="14" height="12" viewBox="0 0 14 12"><rect x="0.5" y="0.5" width="13" height="11" fill="#c7ccd3" stroke="#6a707a"/><rect x="3.5" y="2.5" width="7" height="7" fill="#fff" stroke="#6a707a"/><path d="M5 4.5 H9 M5 6.5 H9" stroke="#6a707a" stroke-width=".8"/></svg>
<svg class="a" style="left:614px;top:620px" width="14" height="12" viewBox="0 0 14 12"><rect x="0.5" y="0.5" width="13" height="11" fill="#c7ccd3" stroke="#6a707a"/><rect x="2" y="1" width="3.5" height="6" fill="#fff"/><rect x="7" y="1" width="3.5" height="6" fill="#fff"/><path d="M1 8 H6 V1 M6.5 1 V5 H13" stroke="#6a707a" fill="none"/></svg>
<div class="t" style="left:640px;top:620px;font-size:11.6px;color:#333">100%</div>
<div class="a" style="left:690px;top:625px;width:102px;height:1px;background:#8a929c"></div>
<div class="a" style="left:690px;top:626px;width:102px;height:1px;background:#fff"></div>
<div class="a" style="left:675px;top:618px;width:16px;height:16px;border-radius:50%;border:1px solid #8e959e;background:radial-gradient(circle at 50% 30%,#fff,#e6e9ee 70%,#cfd4db)"></div>
<div class="a" style="left:791px;top:618px;width:16px;height:16px;border-radius:50%;border:1px solid #8e959e;background:radial-gradient(circle at 50% 30%,#fff,#e6e9ee 70%,#cfd4db)"></div>
<div class="a" style="left:679px;top:625px;width:8px;height:2px;background:#3d4654"></div>
<div class="a" style="left:795px;top:625px;width:8px;height:2px;background:#3d4654"></div>
<div class="a" style="left:798px;top:622px;width:2px;height:8px;background:#3d4654"></div>
<svg class="a" style="left:737px;top:619px" width="10" height="13" viewBox="0 0 10 13"><path d="M0.5 0.5 H9.5 V8 L5 12.5 L0.5 8 Z" fill="#f7f8fa" stroke="#7a828c"/></svg>
<svg class="a" style="left:815px;top:625px" width="11" height="11" viewBox="0 0 11 11"><g fill="#aab2bc"><rect x="8" y="0" width="2" height="2"/><rect x="5" y="3" width="2" height="2"/><rect x="8" y="3" width="2" height="2"/><rect x="2" y="6" width="2" height="2"/><rect x="5" y="6" width="2" height="2"/><rect x="8" y="6" width="2" height="2"/></g></svg>
<div class="a" style="left:39px;top:599px;width:788px;height:16px;background:linear-gradient(180deg,#e3e7ed,#dde2e9)"></div>
<div class="a" style="left:39px;top:599px;width:64px;height:1px;background:#8e98a4"></div>
<div class="a" style="left:500px;top:599px;width:327px;height:1px;background:#b6bec8"></div>
<svg class="a" style="left:45px;top:603px" width="52" height="8" viewBox="0 0 52 8"><rect x="1" y="0" width="1.5" height="8" fill="#5f4f56"/><path d="M7 0 L3 4 L7 8Z" fill="#5f4f56"/><path d="M21 0 L17 4 L21 8Z" fill="#5f4f56"/><path d="M31 0 L35 4 L31 8Z" fill="#5f4f56"/><path d="M45 0 L49 4 L45 8Z" fill="#5f4f56"/><rect x="49.5" y="0" width="1.5" height="8" fill="#5f4f56"/></svg>
<div class="a" style="left:102px;top:600px;width:1px;height:15px;background:#b4bcc6"></div>
<svg class="a" style="left:102px;top:599px" width="400" height="16" viewBox="102 599 400 16"><path d="M103 599 H249 L235 614 H103 Z" fill="#fff"/><path d="M249 600.5 H500" stroke="#f7f9fb" stroke-width="1"/><path d="M235 614 L249 600 M304 614 L318 600 M368 614 L382 600 M428 614 L442 600 M459 614 L473 600" stroke="#8f99a5" stroke-width="1" fill="none"/><path d="M235 614 l3 -3 l2 3 Z M304 614 l3 -3 l2 3 Z M368 614 l3 -3 l2 3 Z M428 614 l3 -3 l2 3 Z M459 614 l3 -3 l2 3 Z" fill="#eef1f4"/></svg>
<div class="t" style="left:112px;top:601px;font:bold 12px 'Liberation Sans';letter-spacing:.6px;color:#4f4f5a">Продукты питания</div>
<div class="t" style="left:251px;top:603px;font-size:11.8px;color:#4a4a55">Таблица</div>
<div class="t" style="left:318px;top:603px;font-size:11.8px;color:#4a4a55">Рассчет</div>
<div class="t" style="left:384px;top:603px;font-size:11.8px;color:#4a4a55">Вывод</div>
<svg class="a" style="left:441px;top:601px" width="15" height="12" viewBox="0 0 15 12">
 <rect x="2.5" y="3.5" width="11" height="8" rx="1" fill="#eaf1fb" stroke="#4a78c0"/>
 <path d="M2.5 8 C5 6 9 10 13.5 8" stroke="#8fb0e0" fill="none"/>
 <circle cx="3" cy="3" r="2.5" fill="#f7c74a"/>
</svg>
<div class="a" style="left:503px;top:600px;width:7px;height:14px;background:#fff;border:1px solid #8e98a4"></div>
<svg class="a" style="left:515px;top:603px" width="5" height="9"><path d="M5 0 L0 4.5 L5 9Z" fill="#5f4f56"/></svg>
<div class="a" style="left:527px;top:600px;width:200px;height:14px;border:1px solid #8e959e;border-radius:2px;background:linear-gradient(180deg,#f5f7fa,#e3e8ef 60%,#d7dde5)"></div>
<div class="a" style="left:623px;top:604px;width:7px;height:7px;background:repeating-linear-gradient(90deg,#727c88 0 1px,transparent 1px 2px)"></div>
<svg class="a" style="left:791px;top:603px" width="5" height="9"><path d="M0 0 L5 4.5 L0 9Z" fill="#5f4f56"/></svg>
<div class="a" style="left:802px;top:600px;width:7px;height:14px;background:#fff;border:1px solid #8e98a4"></div>
<div class="a" style="left:805px;top:603px;width:1px;height:8px;background:#5f4f56"></div>
<div class="a" style="left:506px;top:603px;width:1px;height:8px;background:#5f4f56"></div>
<div class="a" style="left:39px;top:599px;width:1px;height:38px;background:#8e98a4"></div>
<div class="a" style="left:826px;top:599px;width:1px;height:38px;background:#8e98a4"></div>
<svg class="a" style="left:120px;top:250px" width="60" height="370" viewBox="120 250 60 370">
 <defs><filter id="sh" x="-50%" y="-10%" width="200%" height="120%"><feGaussianBlur stdDeviation="2.2"/></filter></defs>
 <g filter="url(#sh)" opacity=".55"><path d="M148.5 264 L150 598" stroke="#333" stroke-width="7.5"/><path d="M144 588 L151 602 L158 588" stroke="#333" stroke-width="8" fill="none"/></g>
 <path d="M143 589.5 L149.6 602 L156.5 589" stroke="#fff" stroke-width="6.6" fill="none" stroke-linejoin="miter" stroke-linecap="round"/>
 <path d="M148 263 L149.5 596" stroke="#e00000" stroke-width="4.6" stroke-linecap="round"/>
 <path d="M143 589.5 L149.6 602 L156.5 589" stroke="#e00000" stroke-width="4.4" fill="none" stroke-linejoin="miter" stroke-linecap="round"/>
</svg>
</body></html>
